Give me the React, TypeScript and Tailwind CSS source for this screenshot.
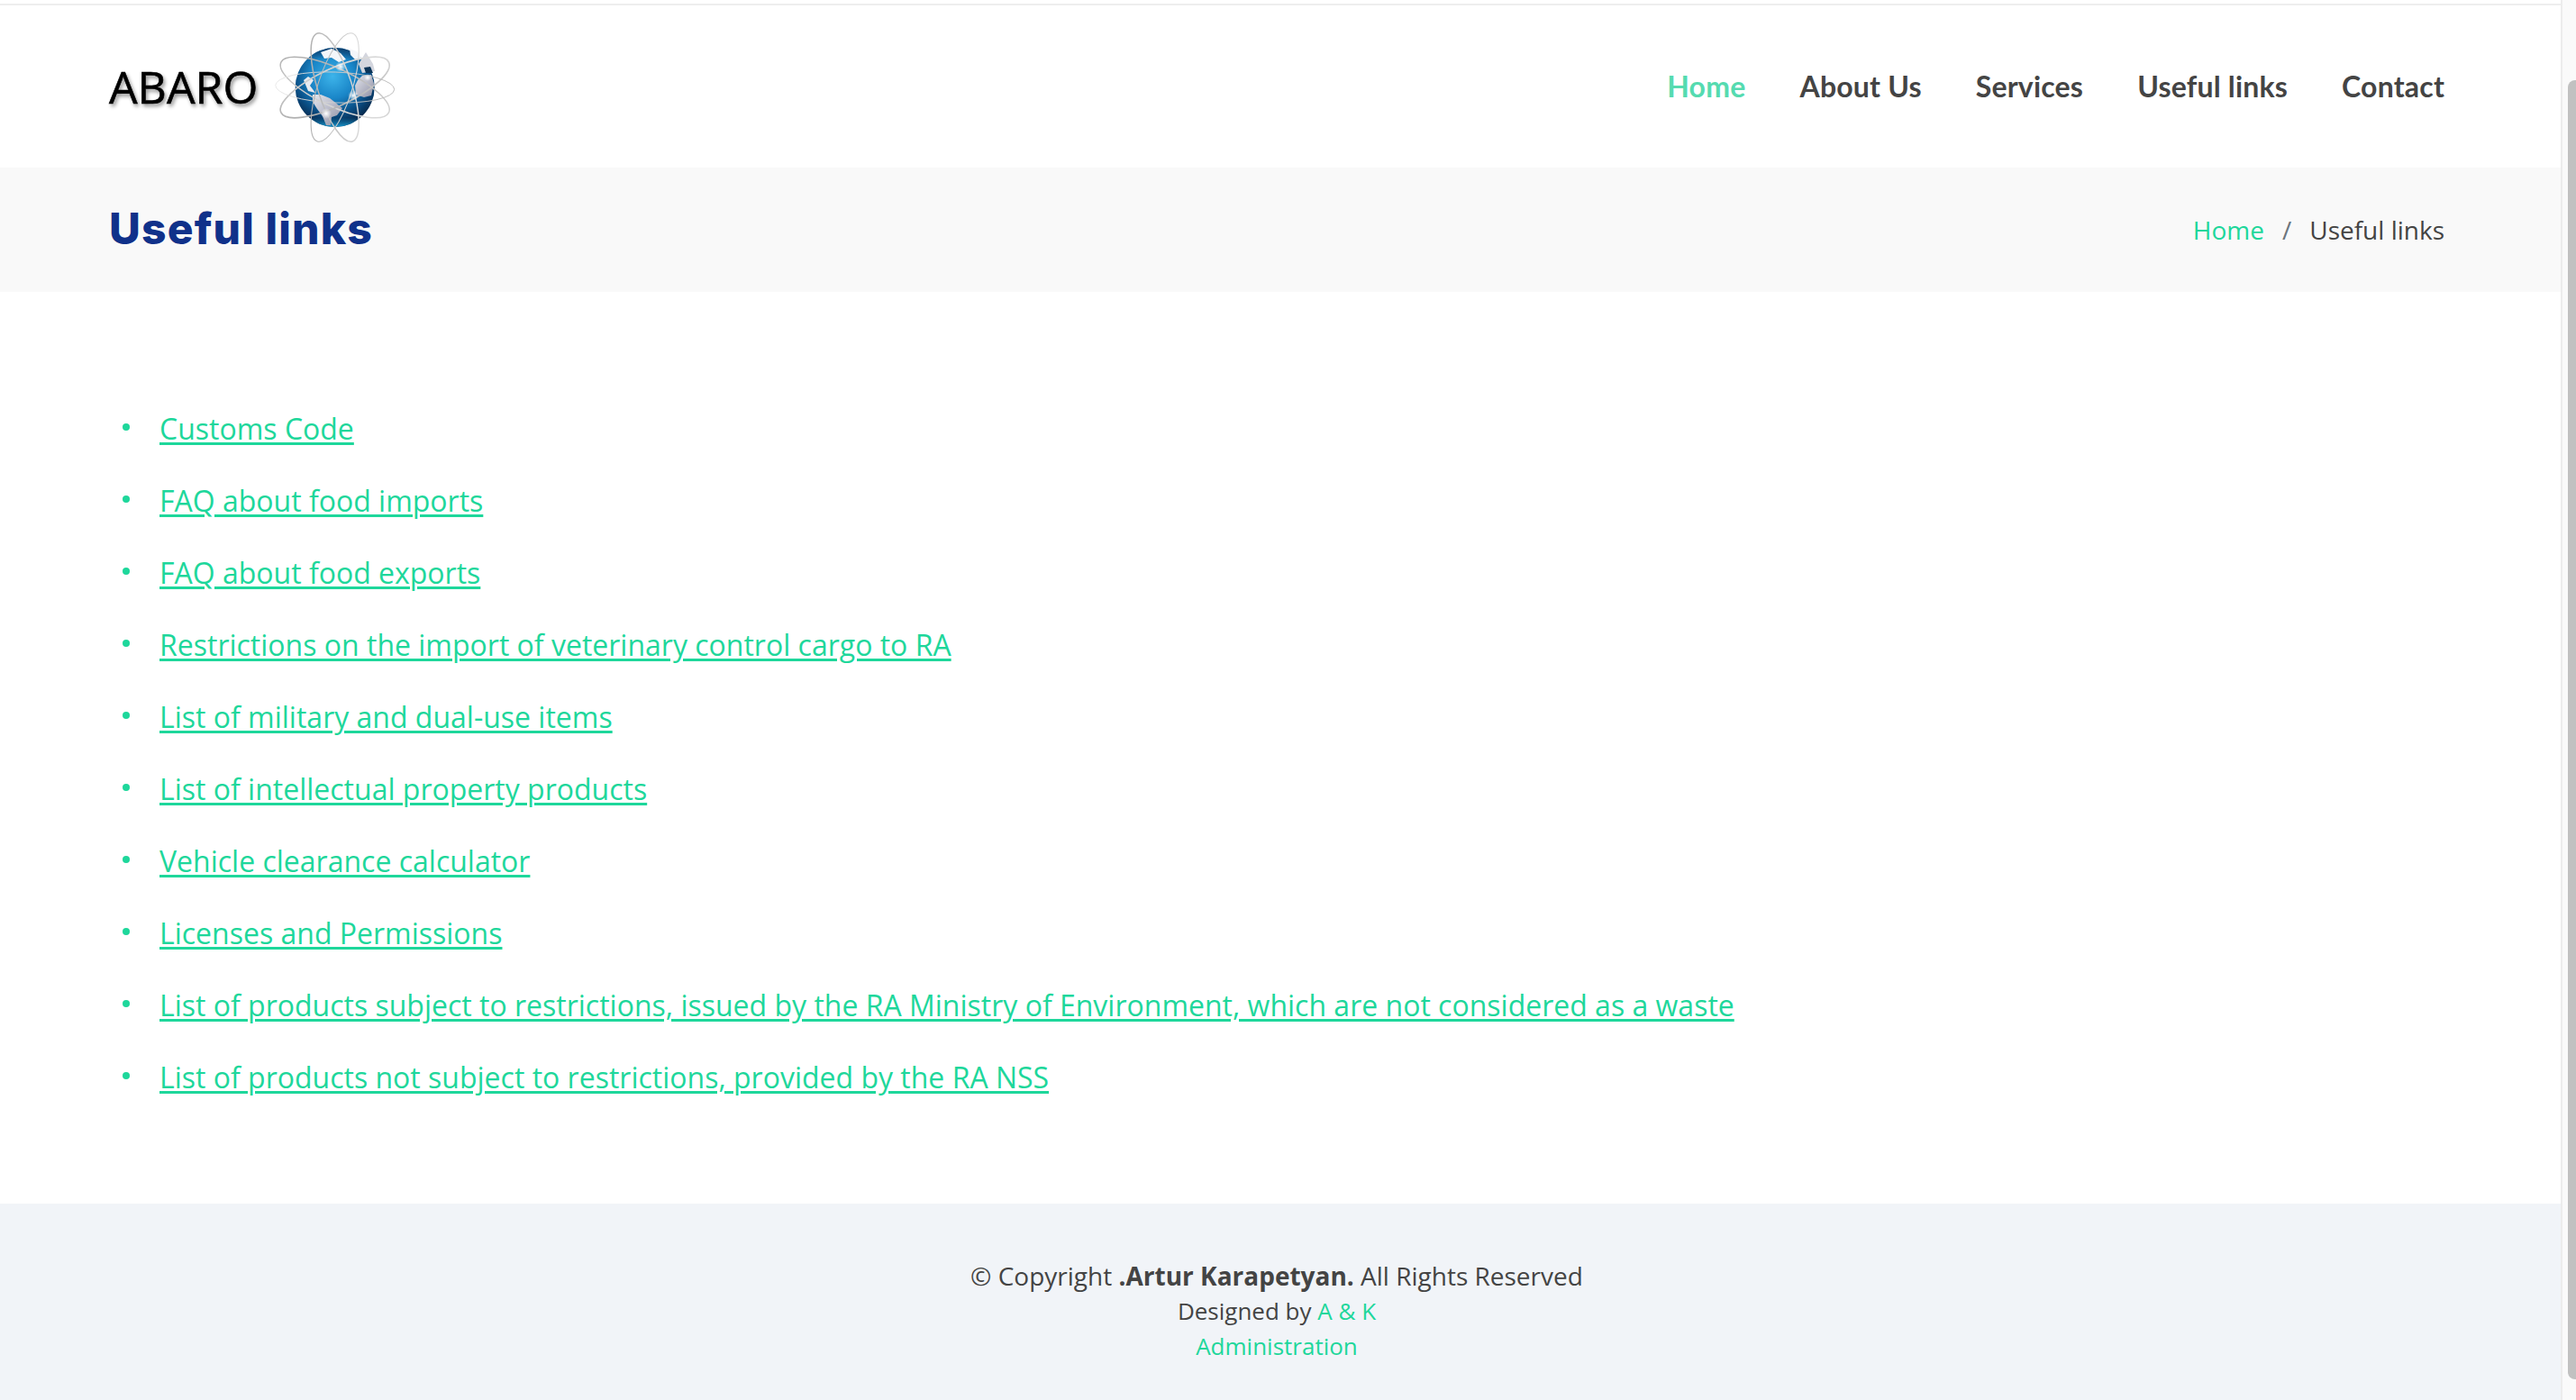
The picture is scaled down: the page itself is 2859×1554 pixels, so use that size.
const links = [
  "Customs Code",
  "FAQ about food imports",
  "FAQ about food exports",
  "Restrictions on the import of veterinary control cargo to RA",
  "List of military and dual-use items",
  "List of intellectual property products",
  "Vehicle clearance calculator",
  "Licenses and Permissions",
  "List of products subject to restrictions, issued by the RA Ministry of Environment, which are not considered as a waste",
  "List of products not subject to restrictions, provided by the RA NSS",
];

const nav = ["About Us", "Services", "Useful links", "Contact"];

function Globe() {
  return (
    <svg viewBox="0 0 160 150" className="w-[160px] h-[150px] shrink-0" aria-hidden="true">
      <defs>
        <radialGradient id="sea" cx="0.47" cy="0.36" r="0.66">
          <stop offset="0" stopColor="#3db4ea" />
          <stop offset="0.42" stopColor="#1a86c8" />
          <stop offset="0.72" stopColor="#0a4f86" />
          <stop offset="1" stopColor="#06203f" />
        </radialGradient>
        <linearGradient id="rim" x1="0" y1="0" x2="0" y2="1">
          <stop offset="0" stopColor="#0b3d6b" />
          <stop offset="0.15" stopColor="#0b3d6b" stopOpacity="0" />
          <stop offset="0.88" stopColor="#0c86c0" stopOpacity="0" />
          <stop offset="1" stopColor="#1a9ad2" />
        </linearGradient>
        <linearGradient id="land" x1="0" y1="0" x2="1" y2="1">
          <stop offset="0" stopColor="#e4e6ee" />
          <stop offset="1" stopColor="#8f90a4" />
        </linearGradient>
        <linearGradient id="orbA" x1="0" y1="0" x2="1" y2="1">
          <stop offset="0" stopColor="#a8a8a8" />
          <stop offset="1" stopColor="#e2e2e2" />
        </linearGradient>
        <linearGradient id="orbB" x1="1" y1="0" x2="0" y2="1">
          <stop offset="0" stopColor="#e2e2e2" />
          <stop offset="1" stopColor="#a8a8a8" />
        </linearGradient>
        <linearGradient id="orbC" x1="0" y1="0" x2="1" y2="0">
          <stop offset="0" stopColor="#e8e8e8" />
          <stop offset="1" stopColor="#b4b4b4" />
        </linearGradient>
        <radialGradient id="spark">
          <stop offset="0" stopColor="#ffffff" />
          <stop offset="1" stopColor="#ffffff" stopOpacity="0" />
        </radialGradient>
      </defs>
      <circle cx="81.7" cy="76" r="44" fill="url(#sea)" />
      <circle cx="81.7" cy="76" r="44" fill="url(#rim)" />
      <path d="M57 84 L66 84 L76 88 L90 99 L84 107 L78 109 L77 118 L72 118 L68 108 L62 100 L57 92 Z" fill="url(#land)" />
      <path d="M107 68 L112 63 L122 62 L125 72 L122 85 L114 87 L105 84 L104 74 Z" fill="url(#land)" />
      <path d="M116 37 L124 50 L126 58 L112 60 L108 50 Z" fill="#d4d6de" />
      <path d="M66 37 L78 33 L88 38 L94 45 L86 48 L78 43 L70 44 Z" fill="#f4f6fa" />
      <path d="M98 33 L106 36 L112 44 L104 45 L99 40 Z" fill="#f4f6fa" />
      <path d="M47 68 L52 64 L58 68 L54 74 L60 82 L52 80 Z" fill="#e8eaf0" />
      <path d="M114 54 L121 53 L124 60 L116 60 Z" fill="#0b3458" />
      <g fill="none">
        <ellipse cx="81.7" cy="76" rx="66" ry="21" transform="rotate(25 81.7 76)" stroke="url(#orbA)" strokeWidth="1.5" />
        <ellipse cx="81.7" cy="76" rx="66" ry="21" transform="rotate(-25 81.7 76)" stroke="url(#orbB)" strokeWidth="1.7" />
        <ellipse cx="81.7" cy="76" rx="66" ry="17" transform="rotate(2 81.7 76)" stroke="url(#orbC)" strokeWidth="0.9" />
        <ellipse cx="81.7" cy="76" rx="19" ry="63" transform="rotate(-18 81.7 76)" stroke="url(#orbA)" strokeWidth="1.5" />
        <ellipse cx="81.7" cy="76" rx="19" ry="63" transform="rotate(18 81.7 76)" stroke="url(#orbB)" strokeWidth="1.1" />
      </g>
      <circle cx="88" cy="53" r="6" fill="url(#spark)" />
      <circle cx="102" cy="85" r="6" fill="url(#spark)" />
      <circle cx="72" cy="105" r="6" fill="url(#spark)" />
      <circle cx="118" cy="65" r="4" fill="url(#spark)" />
    </svg>
  );
}

export default function App() {
  return (
    <div className="flex h-screen w-full overflow-hidden bg-white font-['Open_Sans',sans-serif] text-[#444444]">
      <div className="flex min-w-0 flex-1 flex-col border-r-2 border-[#ececec]">
        <div className="h-[6px] shrink-0 border-b-2 border-[#eeeeee]" />
        <header className="flex h-[180px] shrink-0 items-center justify-between pl-[121px] pr-[129px]">
          <div className="flex items-center gap-[21px]">
            <span className="text-[50px] leading-none text-black [-webkit-text-stroke:0.6px_black] [text-shadow:2px_3px_4px_#8a8a8a]">
              ABARO
            </span>
            <div className="-ml-[17px]"><Globe /></div>
          </div>
          <nav className="flex items-center gap-[60px] font-['Lato',sans-serif] text-[32px] font-bold tracking-[0.2px]">
            <a className="text-[#55dbb0]">Home</a>
            {nav.map((n) => (
              <a key={n}>{n}</a>
            ))}
          </nav>
        </header>
        <section className="flex h-[138px] shrink-0 items-center justify-between bg-[#f9f9f9] pl-[121px] pr-[129px]">
          <h1 className="-mt-[3px] font-['Inter',sans-serif] text-[48px] font-extrabold leading-none tracking-[1.15px] text-[#10318a]">
            Useful links
          </h1>
          <div className="flex items-center text-[28px]">
            <a className="text-[#1ed79b]">Home</a>
            <span className="mx-[20px] text-[#6c757d]">/</span>
            <span>Useful links</span>
          </div>
        </section>
        <main className="flex-1 pl-[136px] pt-[112px]">
          <ul className="flex flex-col">
            {links.map((l) => (
              <li key={l} className="flex h-[80px] items-start text-[32px] leading-[80px] text-[#1ed79b]">
                <span className="mt-[34px] mr-[33px] size-[8px] shrink-0 rounded-full bg-[#1ed79b]" />
                <a className="underline decoration-[3px] underline-offset-[3px]">{l}</a>
              </li>
            ))}
          </ul>
        </main>
        <footer className="flex h-[218px] shrink-0 flex-col items-center bg-[#f1f4f8] pr-[8px] pt-[61px] text-[28px] leading-[39px]">
          <div>
            © Copyright <strong className="font-bold">.Artur Karapetyan.</strong> All Rights Reserved
          </div>
          <div className="text-[26px]">
            Designed by <a className="text-[#1ed79b]">A &amp; K</a>
          </div>
          <a className="text-[26px] text-[#1ed79b]">Administration</a>
        </footer>
      </div>
      <aside className="h-full w-[15px] shrink-0 bg-[#fafafa] pb-[23px] pl-[6px] pt-[89px]">
        <div className="h-full rounded-l-[8px] bg-[#c1c1c1]" />
      </aside>
    </div>
  );
}
